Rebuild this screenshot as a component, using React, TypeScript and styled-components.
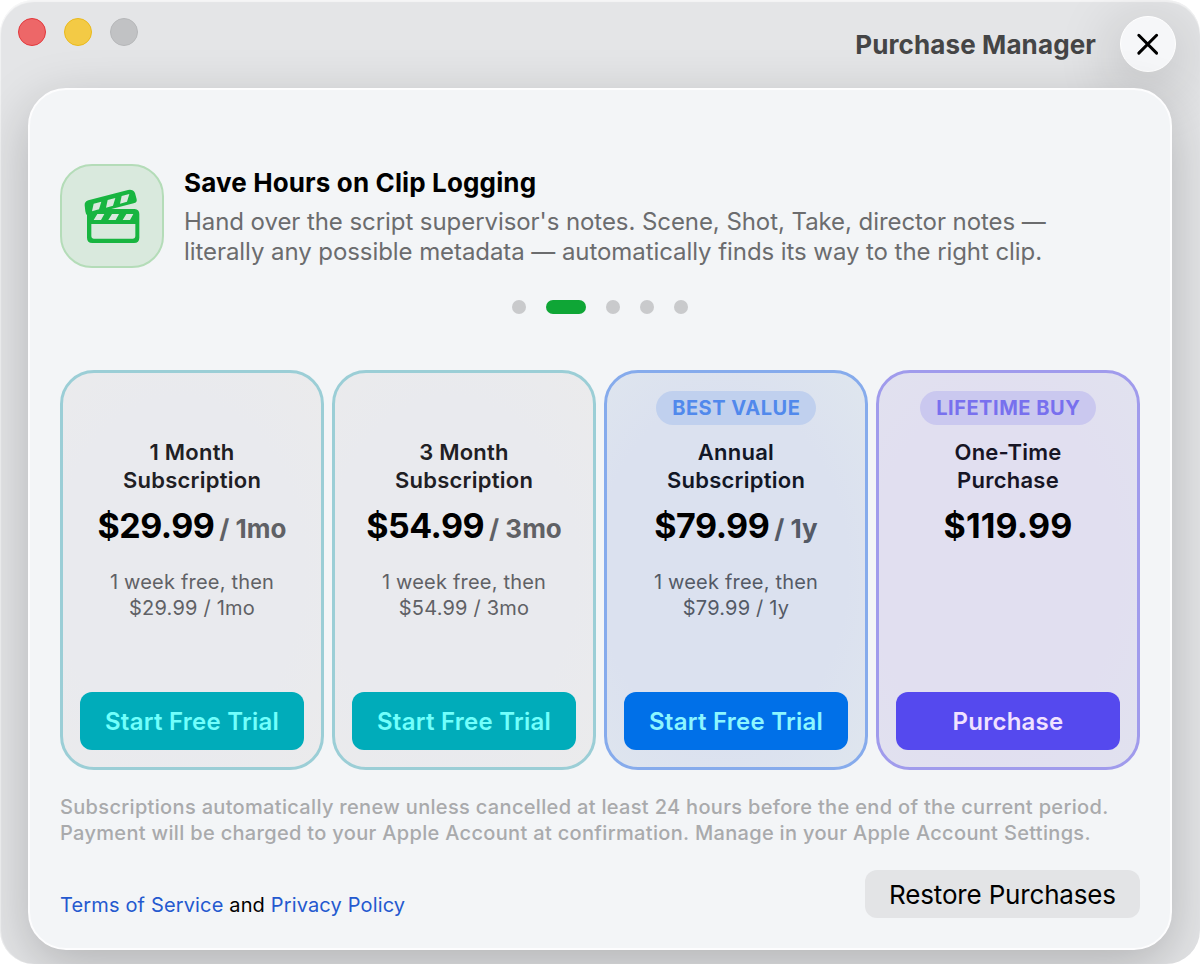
import React from 'react';
import styled, { createGlobalStyle } from 'styled-components';

const GlobalStyle = createGlobalStyle`
  * { box-sizing: border-box; }
  body {
    margin: 0;
    background: #fff;
    font-family: Inter, "Liberation Sans", sans-serif;
    font-feature-settings: "calt" 0;
    -webkit-font-smoothing: antialiased;
  }
  h1, h2, h3, p { margin: 0; }
  button { font-family: inherit; border: 0; padding: 0; cursor: pointer; }
`;

const Window = styled.main`
  width: 1200px;
  height: 964px;
  display: flex;
  flex-direction: column;
  overflow: hidden;
  border-radius: 34px;
  background: #e4e5e7;
  box-shadow: inset 0 2px 1px rgba(255, 255, 255, 0.6), inset 1px 0 1px rgba(255, 255, 255, 0.5);
`;

const TitleBar = styled.header`
  flex: none;
  height: 88px;
  display: flex;
  justify-content: space-between;
  padding: 16px 24px 0 18px;
`;

const Lights = styled.div`
  display: flex;
  gap: 18px;
  padding-top: 2px;
`;

const Light = styled.span<{ $fill: string; $ring: string }>`
  width: 28px;
  height: 28px;
  border-radius: 50%;
  background: ${(p) => p.$fill};
  border: 1px solid ${(p) => p.$ring};
`;

const TitleGroup = styled.div`
  display: flex;
  height: 56px;
  align-items: center;
  gap: 24px;
`;

const WindowTitle = styled.h1`
  font-size: 26px;
  font-weight: 700;
  letter-spacing: 0.12px;
  line-height: 32px;
  color: #454546;
  padding-top: 1px;
`;

const CloseButton = styled.button`
  width: 56px;
  height: 56px;
  border-radius: 50%;
  display: flex;
  align-items: center;
  justify-content: center;
  background: #f6f7f9;
  border: 1.5px solid #fff;
  box-shadow: 0 12px 60px 8px rgba(0, 0, 0, 0.16);
`;

const Panel = styled.section`
  flex: none;
  width: 1144px;
  height: 862px;
  margin-left: 28px;
  padding: 74px 30px 0;
  border: 2px solid #fdfdfe;
  border-radius: 38px;
  background: #f3f5f7;
  position: relative;
  box-shadow: 0 16px 54px rgba(0, 0, 0, 0.22);
`;

const Feature = styled.div`
  display: flex;
  gap: 20px;
`;

const FeatureTile = styled.div`
  flex: none;
  width: 104px;
  height: 104px;
  display: flex;
  align-items: center;
  justify-content: center;
  border: 2px solid #b4dcb8;
  border-radius: 32px;
  background: #d9e9dd;
`;

const FeatureTitle = styled.h2`
  margin-top: 3px;
  font-size: 26px;
  font-weight: 700;
  line-height: 32px;
  letter-spacing: 0.14px;
  color: #000;
`;

const FeatureText = styled.p`
  margin-top: 8px;
  font-size: 24px;
  line-height: 30px;
  letter-spacing: -0.07px;
  color: #6b6c6e;
  white-space: nowrap;
`;

const Dots = styled.div`
  display: flex;
  justify-content: center;
  gap: 20px;
  margin-top: 32px;
`;

const Dot = styled.span<{ $active?: boolean }>`
  width: ${(p) => (p.$active ? 40 : 14)}px;
  height: 14px;
  border-radius: 7px;
  background: ${(p) => (p.$active ? '#0fa636' : '#c9cacc')};
`;

const Plans = styled.div`
  display: grid;
  grid-template-columns: repeat(4, 264px);
  gap: 8px;
  margin-top: 56px;
`;

const PlanCard = styled.article<{ $border: string; $from: string; $to: string }>`
  height: 400px;
  display: flex;
  flex-direction: column;
  align-items: center;
  padding: 18px 17px 17px;
  border: 3px solid ${(p) => p.$border};
  border-radius: 34px;
  background: radial-gradient(ellipse at 45% 50%, ${(p) => p.$from} 62%, ${(p) => p.$to} 100%);
  text-align: center;
`;

const BadgeSlot = styled.div`
  flex: none;
  height: 34px;
  display: flex;
`;

const Badge = styled.span<{ $bg: string; $color: string }>`
  padding: 0 15.5px 0 16px;
  border-radius: 17px;
  font-size: 20px;
  line-height: 34px;
  font-weight: 700;
  letter-spacing: 0.53px;
  background: ${(p) => p.$bg};
  color: ${(p) => p.$color};
`;

const PlanName = styled.h3<{ $color: string }>`
  margin-top: 13px;
  font-size: 22px;
  font-weight: 600;
  line-height: 28px;
  letter-spacing: 0.25px;
  color: ${(p) => p.$color};
  white-space: pre-line;
`;

const PriceRow = styled.div`
  display: flex;
  align-items: baseline;
  justify-content: center;
  gap: 5px;
  margin-top: 10px;
  line-height: 44px;
  white-space: nowrap;
`;

const Price = styled.span<{ $tracking: number }>`
  font-size: 34px;
  font-weight: 700;
  letter-spacing: ${(p) => p.$tracking}px;
  color: #000;
`;

const Period = styled.span<{ $color: string }>`
  font-size: 26px;
  font-weight: 700;
  letter-spacing: 0;
  color: ${(p) => p.$color};
`;

const TrialNote = styled.p<{ $color: string }>`
  margin-top: 18px;
  font-size: 20px;
  line-height: 26px;
  letter-spacing: 0.2px;
  color: ${(p) => p.$color};
  white-space: pre-line;
`;

const BuyButton = styled.button<{ $bg: string; $color: string }>`
  width: 224px;
  height: 58px;
  margin-top: auto;
  border-radius: 12px;
  font-size: 24px;
  font-weight: 600;
  letter-spacing: 0.25px;
  background: ${(p) => p.$bg};
  color: ${(p) => p.$color};
`;

const Legal = styled.p`
  margin-top: 24px;
  font-size: 20px;
  font-weight: 500;
  line-height: 26px;
  letter-spacing: 0.325px;
  color: #a9aaac;
  white-space: nowrap;
`;

const Footer = styled.footer`
  display: flex;
  justify-content: space-between;
  margin-top: 24px;
`;

const Links = styled.p`
  padding-top: 22px;
  font-size: 20px;
  line-height: 26px;
  letter-spacing: 0.15px;
  color: #000;
`;

const Link = styled.a`
  color: #2459cf;
`;

const RestoreButton = styled.button`
  width: 275px;
  height: 48px;
  border-radius: 12px;
  background: #e3e4e6;
  font-size: 26px;
  letter-spacing: -0.17px;
  color: #000;
`;

const ClapperIcon = () => (
  <svg width="56" height="56" viewBox="102 114 168 168" fill="#18b540" fillRule="evenodd">
    <path d="M104 166 Q103 155 115 151 L234 120 Q249 117 255 129 L260 148 Q262 158 251 160 L184 177 H254 Q268 178 268 192 V263 Q268 279 252 279 H127 Q111 279 111 263 V195 Q107 192 106 184 Z
      M131 161 L154 155 L147 178 L126 184 Z
      M173 150 L196 144 L189 167 L168 173 Z
      M215 138 L238 132 L231 155 L210 161 Z
      M142 192 H163 L153 210 H131 Z
      M186 192 H207 L197 210 H175 Z
      M229 192 H250 L240 210 H218 Z
      M124 222 V259 Q124 266 131 266 H249 Q256 266 256 259 V222 Z" />
  </svg>
);

const CloseIcon = () => (
  <svg width="24" height="24" viewBox="0 0 24 24" stroke="#000" strokeWidth="3" strokeLinecap="round">
    <path d="M2.8 3.3 L20.6 21.1 M20.6 3.3 L2.8 21.1" />
  </svg>
);

interface Plan {
  name: string;
  price: string;
  period?: string;
  note?: string;
  action: string;
  badge?: string;
  theme: Theme;
}

interface Theme {
  border: string;
  from: string;
  to: string;
  name: string;
  muted: string;
  badgeBg: string;
  badge: string;
  button: string;
  label: string;
}

const teal: Theme = {
  border: '#9bced6', from: '#e9eaee', to: '#ebebec', name: '#1f2024', muted: '#606165',
  badgeBg: '', badge: '', button: '#00acba', label: '#72fffc',
};
const blue: Theme = {
  border: '#86abec', from: '#dbe1ef', to: '#dfe6ee', name: '#121726', muted: '#545a66',
  badgeBg: '#c0d0ee', badge: '#5189ec', button: '#0070e8', label: '#8cf6ff',
};
const violet: Theme = {
  border: '#a09bec', from: '#e1dff0', to: '#e1e2ef', name: '#171525', muted: '#5a5866',
  badgeBg: '#cac8ef', badge: '#7870ee', button: '#5549ee', label: '#f0e2ff',
};

const plans: Plan[] = [
  { name: '1 Month\nSubscription', price: '$29.99', period: '/ 1mo', note: '1 week free, then\n$29.99 / 1mo', action: 'Start Free Trial', theme: teal },
  { name: '3 Month\nSubscription', price: '$54.99', period: '/ 3mo', note: '1 week free, then\n$54.99 / 3mo', action: 'Start Free Trial', theme: teal },
  { name: 'Annual\nSubscription', price: '$79.99', period: '/ 1y', note: '1 week free, then\n$79.99 / 1y', action: 'Start Free Trial', badge: 'BEST VALUE', theme: blue },
  { name: 'One-Time\nPurchase', price: '$119.99', action: 'Purchase', badge: 'LIFETIME BUY', theme: violet },
];

export default function App() {
  return (
    <>
      <GlobalStyle />
      <Window>
        <TitleBar>
          <Lights>
            <Light $fill="#ed6768" $ring="#e2383c" />
            <Light $fill="#f3ca45" $ring="#e9b91c" />
            <Light $fill="#c1c2c4" $ring="#b6b7b9" />
          </Lights>
          <TitleGroup>
            <WindowTitle>Purchase Manager</WindowTitle>
            <CloseButton aria-label="Close"><CloseIcon /></CloseButton>
          </TitleGroup>
        </TitleBar>
        <Panel>
          <Feature>
            <FeatureTile><ClapperIcon /></FeatureTile>
            <div>
              <FeatureTitle>Save Hours on Clip Logging</FeatureTitle>
              <FeatureText>
                Hand over the script supervisor's notes. Scene, Shot, Take, director notes —<br />
                literally any possible metadata — automatically finds its way to the right clip.
              </FeatureText>
            </div>
          </Feature>
          <Dots>
            {[0, 1, 2, 3, 4].map((i) => <Dot key={i} $active={i === 1} />)}
          </Dots>
          <Plans>
            {plans.map((plan) => (
              <PlanCard key={plan.name} $border={plan.theme.border} $from={plan.theme.from} $to={plan.theme.to}>
                <BadgeSlot>
                  {plan.badge && <Badge $bg={plan.theme.badgeBg} $color={plan.theme.badge}>{plan.badge}</Badge>}
                </BadgeSlot>
                <PlanName $color={plan.theme.name}>{plan.name}</PlanName>
                <PriceRow>
                  <Price $tracking={plan.period ? -0.5 : 0.15}>{plan.price}</Price>
                  {plan.period && <Period $color={plan.theme.muted}>{plan.period}</Period>}
                </PriceRow>
                {plan.note && <TrialNote $color={plan.theme.muted}>{plan.note}</TrialNote>}
                <BuyButton $bg={plan.theme.button} $color={plan.theme.label}>{plan.action}</BuyButton>
              </PlanCard>
            ))}
          </Plans>
          <Legal>
            Subscriptions automatically renew unless cancelled at least 24 hours before the end of the current period.<br />
            Payment will be charged to your Apple Account at confirmation. Manage in your Apple Account Settings.
          </Legal>
          <Footer>
            <Links><Link>Terms of Service</Link> and <Link>Privacy Policy</Link></Links>
            <RestoreButton>Restore Purchases</RestoreButton>
          </Footer>
        </Panel>
      </Window>
    </>
  );
}
